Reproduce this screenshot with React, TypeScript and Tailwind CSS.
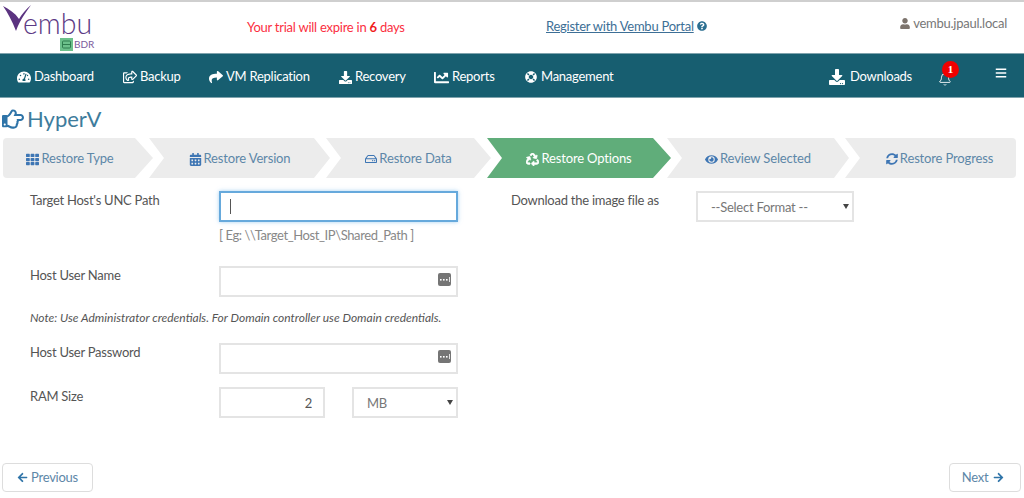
import type { ReactNode } from 'react'
import { Bell } from 'lucide-react'
import {
  FaArrowLeft,
  FaArrowRight,
  FaBars,
  FaCalendarAlt,
  FaDownload,
  FaEye,
  FaLifeRing,
  FaQuestionCircle,
  FaRecycle,
  FaRegHandPointRight,
  FaRegHdd,
  FaRegShareSquare,
  FaShare,
  FaSyncAlt,
  FaTachometerAlt,
  FaTh,
  FaUser,
  FaChartLine,
} from 'react-icons/fa'

const navItems = [
  { label: 'Dashboard', icon: <FaTachometerAlt className="w-[14px] h-[14px]" />, width: 'w-[106px]', gap: 'gap-[3px]' },
  { label: 'Backup', icon: <FaRegShareSquare className="w-[14px] h-[14px]" />, width: 'w-[86px]', gap: 'gap-[3px]' },
  { label: 'VM Replication', icon: <FaShare className="w-[14px] h-[14px]" />, width: 'w-[130px]', gap: 'gap-[3px]' },
  { label: 'Recovery', icon: <FaDownload className="w-[13px] h-[13px]" />, width: 'w-[95px]', gap: 'gap-[3px]' },
  { label: 'Reports', icon: <FaChartLine className="w-[15px] h-[15px]" />, width: 'w-[91px]', gap: 'gap-[3px]' },
  { label: 'Management', icon: <FaLifeRing className="w-[12px] h-[12px]" />, width: 'w-auto', gap: 'gap-[4px]' },
]

const steps: { label: string; icon: ReactNode; className: string; active?: boolean }[] = [
  {
    label: 'Restore Type',
    icon: <FaTh className="w-[13px] h-[13px]" />,
    className: 'w-[150px] pr-[16px] rounded-l-sm [clip-path:polygon(0_0,132px_0,150px_50%,132px_100%,0_100%)]',
  },
  {
    label: 'Restore Version',
    icon: <FaCalendarAlt className="w-[13px] h-[13px]" />,
    className: 'w-[181px] [clip-path:polygon(0_0,165px_0,181px_50%,165px_100%,0_100%,15px_50%)]',
  },
  {
    label: 'Restore Data',
    icon: <FaRegHdd className="w-[12px] h-[12px]" />,
    className: 'w-[165px] [clip-path:polygon(0_0,148px_0,165px_50%,148px_100%,0_100%,15px_50%)]',
  },
  {
    label: 'Restore Options',
    icon: <FaRecycle className="w-[13px] h-[13px] stroke-white stroke-[24px]" />,
    className: 'w-[184px] [clip-path:polygon(0_0,166px_0,184px_50%,166px_100%,0_100%,15px_50%)]',
    active: true,
  },
  {
    label: 'Review Selected',
    icon: <FaEye className="w-[13px] h-[13px]" />,
    className: 'w-[182px] [clip-path:polygon(0_0,167px_0,182px_50%,167px_100%,0_100%,15px_50%)]',
  },
  {
    label: 'Restore Progress',
    icon: <FaSyncAlt className="w-[12px] h-[12px]" />,
    className: 'w-[171px] pl-[18px] rounded-r-sm [clip-path:polygon(0_0,100%_0,100%_100%,0_100%,15px_50%)]',
  },
]

function KeyIcon() {
  return (
    <svg width="13" height="13" viewBox="0 0 13 13" className="absolute right-[7px] top-[7px]">
      <rect width="13" height="13" rx="2" fill="#757575" />
      <rect x="2" y="6" width="1.6" height="1.6" fill="#fff" />
      <rect x="5" y="6" width="1.6" height="1.6" fill="#fff" />
      <rect x="8" y="6" width="1.6" height="1.6" fill="#fff" />
      <rect x="11" y="4" width="0.8" height="5" fill="#fff" />
    </svg>
  )
}

function Logo() {
  return (
    <div className="relative w-[100px] h-[51px] shrink-0">
      <svg width="32" height="33" viewBox="0 0 32 33" className="absolute left-0 top-0">
        <path d="M1 4 C7 7 13 11 17 17 C20 12 24 7 29 3 C24 10 18 18 14 29 C10 19 6 11 1 4 Z" fill="#5b3380" />
      </svg>
      <span className="absolute left-[21px] top-[9px] text-[28.5px] leading-[24px] tracking-normal font-light text-[#5c3a85]">
        embu
      </span>
      <svg width="13" height="13" viewBox="0 0 13 13" className="absolute left-[58px] top-[36px]">
        <rect width="13" height="13" fill="#6cc08b" />
        <rect x="2.5" y="3" width="8" height="7" rx="1" fill="none" stroke="#2f7d4f" strokeWidth="1" />
        <path d="M2.5 6.5 H10.5" stroke="#2f7d4f" strokeWidth="1" />
      </svg>
      <span className="absolute left-[72px] top-[36px] text-[10px] leading-[13px] tracking-normal text-[#7c5c9c]">BDR</span>
    </div>
  )
}

function TextField({ keyIcon }: { keyIcon?: boolean }) {
  return (
    <div className="relative w-[239px] h-[31px]">
      <input type="text" className="w-full h-full border-2 border-[#e4e4e4] bg-white outline-none" />
      {keyIcon && <KeyIcon />}
    </div>
  )
}

function SelectField({ value, className }: { value: string; className: string }) {
  return (
    <div className={`relative h-[31px] ${className}`}>
      <select className="w-full h-full appearance-none border-2 border-[#e4e4e4] bg-white pl-[13px] pt-[2px] text-[#777] outline-none">
        <option>{value}</option>
      </select>
      <span className="absolute right-[5px] top-[13px] border-x-[3px] border-t-[5px] border-x-transparent border-t-[#444]" />
    </div>
  )
}

export default function App() {
  return (
    <div className="w-[1024px] h-[498px] bg-white overflow-hidden text-[13px] tracking-[-0.25px] text-[#555] font-['Lato','Open_Sans',sans-serif]">
      {/* Top header */}
      <header className="h-[53px] border-t-2 border-[#cfcfcf] flex items-start pl-[2px]">
        <Logo />
        <p className="ml-[145px] mt-[16px] w-[299px] leading-[18px] text-[#fb2f3f]">
          Your trial will expire in <b className="text-[#f01b1b]">6</b> days
        </p>
        <a className="mt-[15px] leading-[18px] text-[#3d6f96] underline">Register with Vembu Portal</a>
        <FaQuestionCircle className="ml-[3px] mt-[19px] w-[10px] h-[10px] text-[#2c6f91]" />
        <div className="ml-auto mr-[17px] mt-[12px] flex items-center gap-[3px] leading-[18px] text-[#777]">
          <FaUser className="w-[10px] h-[11px] text-[#7d746d]" />
          vembu.jpaul.local
        </div>
      </header>

      {/* Main nav */}
      <nav className="h-[45px] bg-[#175e70] flex items-center pl-[17px] pt-[3px] border-y border-[#7fa3ad] text-white">
        {navItems.map((item) => (
          <div key={item.label} className={`flex items-center shrink-0 ${item.gap} ${item.width}`}>
            {item.icon}
            {item.label}
          </div>
        ))}
        <div className="ml-auto flex items-center gap-[5px]">
          <FaDownload className="w-[16px] h-[16px]" />
          Downloads
        </div>
        <div className="relative ml-[26px] mt-[4px] mr-[43px]">
          <Bell className="w-[14px] h-[15px]" strokeWidth={1.5} />
          <span className="absolute left-[4px] top-[-11px] w-[17px] h-[17px] rounded-full bg-[#f00000] text-white text-[11px] font-bold leading-[17px] text-center tracking-normal font-['Liberation_Serif',serif]">
            1
          </span>
        </div>
        <FaBars className="mr-[17px] mb-[8px] w-[12px] h-[12px]" />
      </nav>

      {/* Page title */}
      <h1 className="h-[40px] pl-[2px] pt-[1px] flex items-center gap-[3px] text-[22px] tracking-normal text-[#3e7c9c]">
        <FaRegHandPointRight className="w-[22px] h-[22px] text-[#2f74a8]" />
        HyperV
      </h1>

      {/* Wizard steps */}
      <div className="flex pl-[3px] h-[40px]">
        {steps.map((step, i) => (
          <div
            key={step.label}
            className={`h-full pt-[2px] flex items-center justify-center gap-[2px] shrink-0 tracking-[-0.15px] ${step.className} ${
              i > 0 ? '-ml-[4px]' : ''
            } ${step.active ? 'bg-[#60ad7a] text-white' : 'bg-[#ececec] text-[#5d87a8]'}`}
          >
            <span className={step.active ? 'text-white' : 'text-[#3e76b4]'}>{step.icon}</span>
            {step.label}
          </div>
        ))}
      </div>

      {/* Form */}
      <div className="flex pt-[13px] h-[285px]">
        <div className="w-[458px] pl-[30px]">
          <div className="flex">
            <label className="w-[189px] leading-[18px]">Target Host's UNC Path</label>
            <div className="relative">
              <input
                type="text"
                className="w-[239px] h-[31px] border-2 border-[#66a9dc] bg-white outline-none shadow-[0_0_4px_rgba(102,175,233,0.6)]"
              />
              <span className="absolute left-[11px] top-[8px] w-px h-[15px] bg-[#555]" />
              <p className="mt-[4px] leading-[18px] text-[#888] tracking-[-0.4px]">
                {'[ Eg: \\\\Target_Host_IP\\Shared_Path ]'}
              </p>
            </div>
          </div>
          <div className="flex mt-[22px]">
            <label className="w-[189px] leading-[18px]">Host User Name</label>
            <TextField keyIcon />
          </div>
          <p className="mt-[12px] leading-[18px] italic text-[12px] tracking-normal text-[#555]">
            Note: Use Administrator credentials. For Domain controller use Domain credentials.
          </p>
          <div className="flex mt-[16px]">
            <label className="w-[189px] leading-[18px]">Host User Password</label>
            <TextField keyIcon />
          </div>
          <div className="flex mt-[13px]">
            <label className="w-[189px] leading-[18px]">RAM Size</label>
            <input
              type="text"
              defaultValue="2"
              className="w-[106px] h-[31px] border-2 border-[#e4e4e4] text-right pr-[11px] outline-none"
            />
            <SelectField value="MB" className="ml-[27px] w-[106px]" />
          </div>
        </div>
        <div className="flex ml-[53px]">
          <label className="w-[185px] leading-[18px]">Download the image file as</label>
          <SelectField value="--Select Format --" className="w-[158px]" />
        </div>
      </div>

      {/* Footer */}
      <div className="flex justify-between px-[2px] text-[#5d87a8]">
        <button className="w-[91px] h-[29px] border border-[#ddd] rounded-sm flex items-center justify-center gap-[3px]">
          <FaArrowLeft className="w-[11px] h-[11px] text-[#2f74a8]" />
          Previous
        </button>
        <button className="mr-[1px] w-[72px] h-[29px] border border-[#ddd] rounded-sm flex items-center justify-center gap-[5px] pr-[4px]">
          Next
          <FaArrowRight className="w-[11px] h-[11px] text-[#2f74a8]" />
        </button>
      </div>
    </div>
  )
}
